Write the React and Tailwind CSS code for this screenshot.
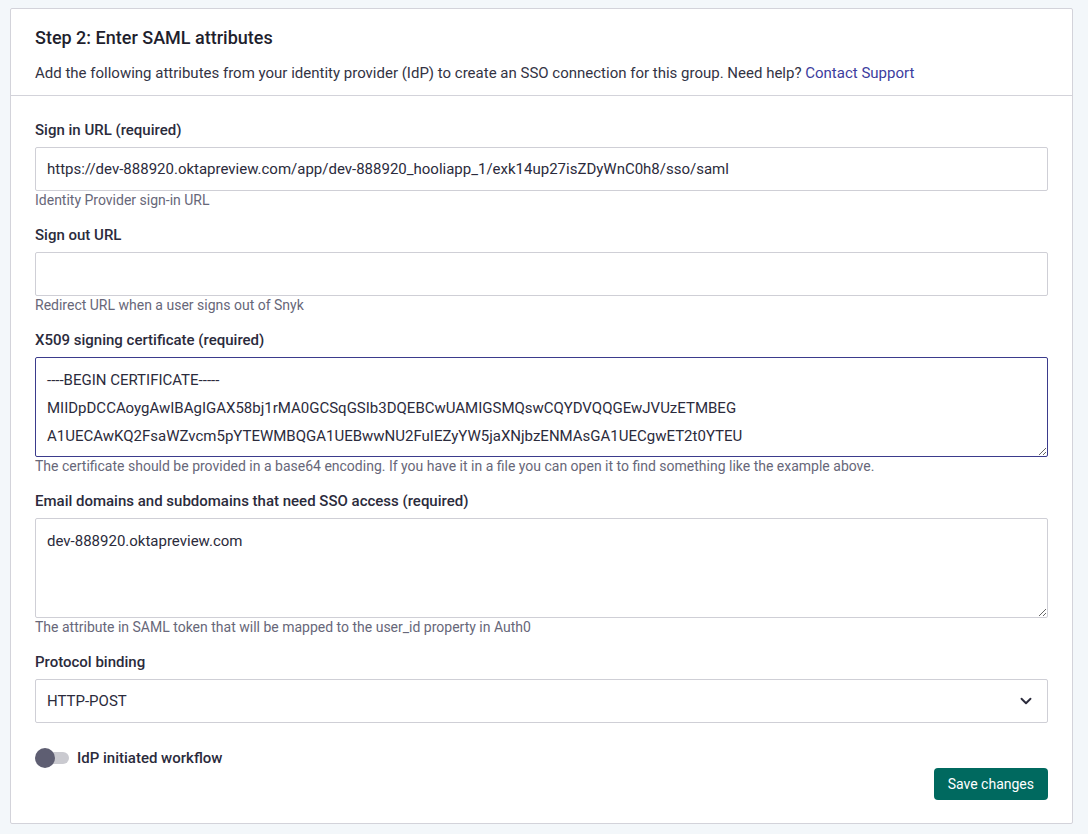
import React from 'react';
import { ChevronDown } from 'lucide-react';

const cert = [
    '----BEGIN CERTIFICATE-----',
    'MIIDpDCCAoygAwIBAgIGAX58bj1rMA0GCSqGSIb3DQEBCwUAMIGSMQswCQYDVQQGEwJVUzETMBEG',
    'A1UECAwKQ2FsaWZvcm5pYTEWMBQGA1UEBwwNU2FuIEZyYW5jaXNjbzENMAsGA1UECgwET2t0YTEU',
].join('\n');

function Field({ label, help, children }) {
    return (
        <div className="mb-4">
            <label className="block text-[15px] font-medium leading-5 text-[#2b2b3c] mb-[7px]">{label}</label>
            {children}
            {help && <p className="text-sm leading-[18px] text-[#676779]">{help}</p>}
        </div>
    );
}

export default function App() {
    return (
        <div className="min-h-[834px] bg-[#f3f7fa] pt-2 pl-2.5 pr-[15px] pb-2.5 font-['Roboto',sans-serif]">
            <div className="bg-white border border-[#d3d3da] rounded-[2px]">
                {/* Header */}
                <div className="px-6 pt-[15px] pb-3 border-b border-[#d3d3da]">
                    <h2 className="text-lg font-medium leading-7 text-[#1f1f2e]">Step 2: Enter SAML attributes</h2>
                    <p className="mt-[11px] text-[15px] leading-5 text-[#333344]">
                        Add the following attributes from your identity provider (IdP) to create an SSO connection for this group. Need help?{' '}
                        <a className="text-[#3d3d9e]">Contact Support</a>
                    </p>
                </div>

                {/* Form */}
                <div className="px-6 pt-6 pb-[23px]">
                    <Field label="Sign in URL (required)" help="Identity Provider sign-in URL">
                        <input
                            readOnly
                            value="https://dev-888920.oktapreview.com/app/dev-888920_hooliapp_1/exk14up27isZDyWnC0h8/sso/saml"
                            className="w-full h-11 px-[11px] border border-[#cfcfd6] rounded-[2px] text-[15px] text-[#2b2b3c] outline-none"
                        />
                    </Field>

                    <Field label="Sign out URL" help="Redirect URL when a user signs out of Snyk">
                        <input readOnly className="w-full h-11 px-[11px] border border-[#cfcfd6] rounded-[2px] text-[15px] outline-none" />
                    </Field>

                    <Field
                        label="X509 signing certificate (required)"
                        help="The certificate should be provided in a base64 encoding. If you have it in a file you can open it to find something like the example above."
                    >
                        <textarea
                            readOnly
                            value={cert}
                            className="block w-full h-[100px] px-[11px] py-2 border border-[#3b3b8c] rounded-[2px] text-[15px] leading-7 text-[#2b2b3c] outline-none overflow-hidden"
                        />
                    </Field>

                    <Field
                        label="Email domains and subdomains that need SSO access (required)"
                        help="The attribute in SAML token that will be mapped to the user_id property in Auth0"
                    >
                        <textarea
                            readOnly
                            value="dev-888920.oktapreview.com"
                            className="block w-full h-[100px] px-[11px] py-2 border border-[#cfcfd6] rounded-[2px] text-[15px] leading-7 text-[#2b2b3c] outline-none"
                        />
                    </Field>

                    <div>
                        <label className="block text-[15px] font-medium leading-5 text-[#2b2b3c] mb-[7px]">Protocol binding</label>
                        <div className="flex items-center justify-between h-11 pl-[11px] pr-3 border border-[#cfcfd6] rounded-[2px]">
                            <span className="text-[15px] text-[#2b2b3c]">HTTP-POST</span>
                            <ChevronDown size={18} strokeWidth={2.5} className="text-[#2b2b3c]" />
                        </div>
                    </div>

                    <div className="flex items-center gap-2 mt-[25px]">
                        <div className="relative w-[34px] h-5 flex items-center">
                            <div className="absolute left-[10px] right-0 h-3 rounded-full bg-[#cacad0]" />
                            <div className="absolute left-0 w-5 h-5 rounded-full bg-[#5e5e72]" />
                        </div>
                        <span className="text-[15px] leading-5 font-medium text-[#2b2b3c]">IdP initiated workflow</span>
                    </div>

                    <div className="flex justify-end">
                        <button className="h-8 px-3.5 rounded bg-[#00695f] text-white text-sm">Save changes</button>
                    </div>
                </div>
            </div>
        </div>
    );
}
